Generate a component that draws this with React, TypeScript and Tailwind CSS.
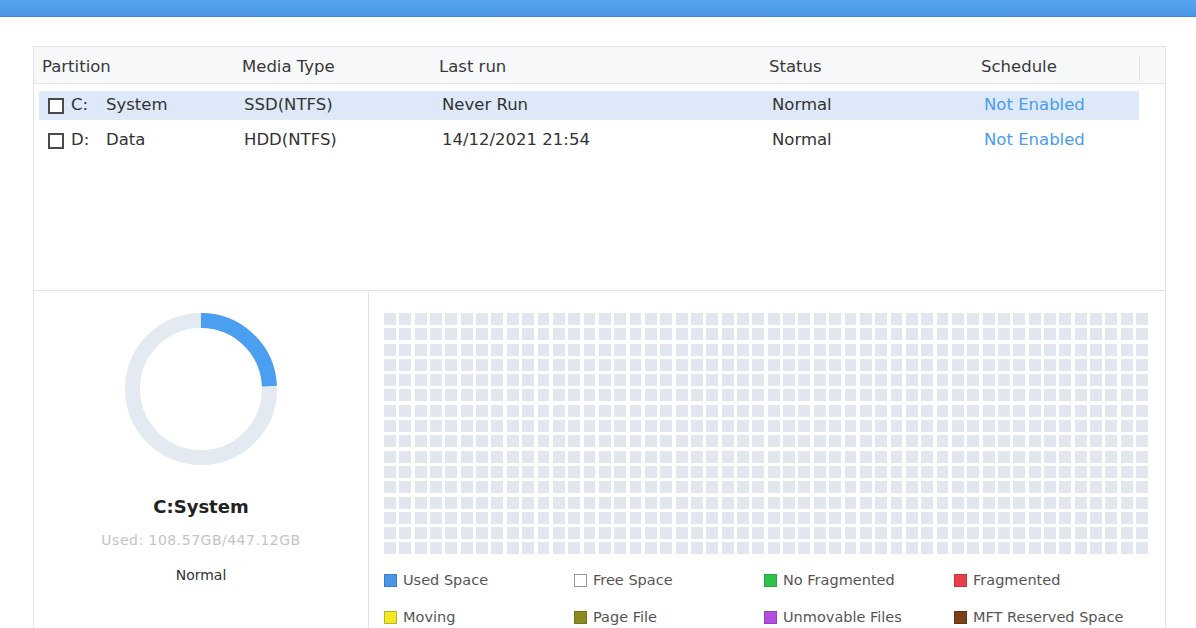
import React from "react";

const font = { fontFamily: '"DejaVu Sans", Verdana, sans-serif' };

const partitions = [
  { drive: "C:", name: "System", media: "SSD(NTFS)", lastRun: "Never Run", status: "Normal", active: true },
  { drive: "D:", name: "Data", media: "HDD(NTFS)", lastRun: "14/12/2021 21:54", status: "Normal", active: false },
];

const legend = [
  { label: "Used Space", cls: "bg-[#4a95e6] border-[#3b7fcc]" },
  { label: "Free Space", cls: "bg-white border-[#9a9a9a]" },
  { label: "No Fragmented", cls: "bg-[#2fc24a] border-[#27a53e]" },
  { label: "Fragmented", cls: "bg-[#e8404a] border-[#c8323b]" },
  { label: "Moving", cls: "bg-[#f2ea1e] border-[#b9b330]" },
  { label: "Page File", cls: "bg-[#8a8a1f] border-[#74741a]" },
  { label: "Unmovable Files", cls: "bg-[#b04ee0] border-[#9640c2]" },
  { label: "MFT Reserved Space", cls: "bg-[#7a4216] border-[#633510]" },
];

const Donut = () => {
  const r = 68.5;
  const c = 2 * Math.PI * r;
  const used = 108.57 / 447.12;
  return (
    <svg width={152} height={152} viewBox="0 0 152 152">
      <circle cx={76} cy={76} r={r} fill="none" stroke="#e4eaf2" strokeWidth={15} />
      <circle
        cx={76}
        cy={76}
        r={r}
        fill="none"
        stroke="#4b9ff0"
        strokeWidth={15}
        strokeDasharray={`${c * used} ${c}`}
        transform="rotate(-90 76 76)"
      />
    </svg>
  );
};

const App = () => {
  return (
    <div className="w-[1196px] h-[628px] overflow-hidden bg-white" style={font}>
      <div className="h-[17px] bg-gradient-to-b from-[#58a3f0] to-[#4b97e8] border-b border-[#3f88d8]" />
      <div className="ml-[33px] mt-[29px] w-[1133px] border border-[#e2e4e8]">
        {/* partition table */}
        <div className="h-[244px] border-b border-[#e2e4e8]">
          <div className="h-[37px] pt-[5px] bg-[#f7f8fa] border-b border-[#e4e6ea] pl-[8px] grid grid-cols-[200px_197px_330px_212px_158px_1fr] items-center text-[16.5px] text-[#383838]">
            <span>Partition</span>
            <span>Media Type</span>
            <span>Last run</span>
            <span>Status</span>
            <span>Schedule</span>
            <span className="h-[26px] border-l border-[#e2e4e8]" />
          </div>
          <div className="pt-[7px] flex flex-col gap-[6px]">
            {partitions.map((p, idx) => (
              <div
                key={idx}
                className={`ml-[5px] w-[1100px] h-[29px] pl-[9px] grid grid-cols-[196px_198px_330px_212px_1fr] items-center text-[16.5px] text-[#333] ${
                  p.active ? "bg-[#dde9f8]" : ""
                }`}
              >
                <div className="flex items-center">
                  <span className="w-[16px] h-[16px] border-2 border-[#4a4a4a] bg-white mr-[7px]" />
                  <span className="w-[35px]">{p.drive}</span>
                  <span>{p.name}</span>
                </div>
                <span>{p.media}</span>
                <span>{p.lastRun}</span>
                <span>{p.status}</span>
                <span className="text-[#4a9cf0]">Not Enabled</span>
              </div>
            ))}
          </div>
        </div>

        {/* detail area */}
        <div className="flex h-[340px]">
          <div className="w-[336px] border-r border-[#e2e4e8] flex flex-col items-center pt-[22px]">
            <Donut />
            <div className="mt-[28px] text-[18px] font-bold text-[#222]">C:System</div>
            <div className="mt-[10px] text-[14px] tracking-[0.5px] text-[#c4c4c4]">Used: 108.57GB/447.12GB</div>
            <div className="mt-[14px] text-[14px] text-[#333]">Normal</div>
          </div>
          <div className="flex-1 pl-[15px] pr-[17px] pt-[22px]">
            <div className="grid grid-cols-[repeat(50,minmax(0,1fr))] gap-x-[3.5px] gap-y-[3.3px] w-[764px]">
              {Array(800)
                .fill(null)
                .map((_, idx) => (
                  <div key={idx} className="h-[12px] bg-[#e2e7ef]" />
                ))}
            </div>
            <div className="mt-[18px] grid grid-cols-[190px_190px_190px_1fr] gap-y-[21px] text-[14.5px] text-[#555]">
              {legend.map((item, idx) => (
                <div key={idx} className="flex items-center gap-[6px] h-[16px]">
                  <span className={`w-[13px] h-[13px] border ${item.cls}`} />
                  <span>{item.label}</span>
                </div>
              ))}
            </div>
          </div>
        </div>
      </div>
    </div>
  );
};

export default App;
